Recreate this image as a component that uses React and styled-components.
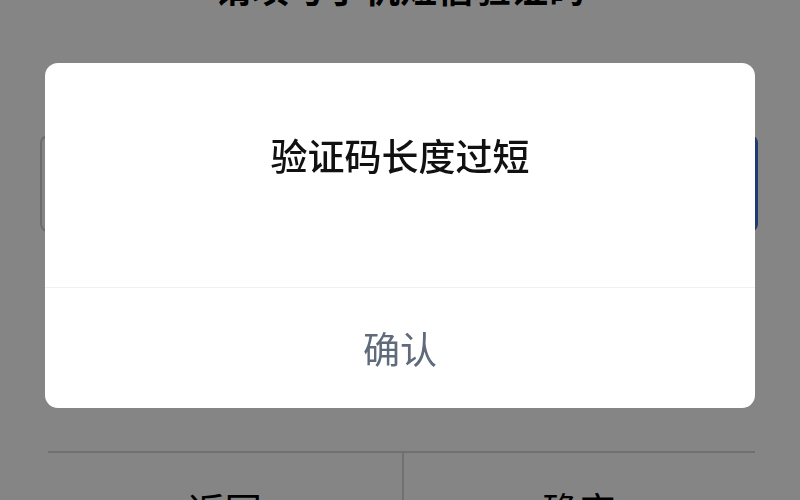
import React from 'react';
import styled, { createGlobalStyle } from 'styled-components';

const GlobalStyle = createGlobalStyle`
  html, body {
    margin: 0;
    padding: 0;
    height: 100%;
    overflow: hidden;
    background: #ffffff;
    font-family: "Noto Sans CJK SC", "Noto Sans", sans-serif;
  }
`

const Page = styled.div`
  display: flex;
  flex-direction: column;
  height: 500px;
  overflow: hidden;

  & > * {
    flex-shrink: 0;
  }
`

const PageTitle = styled.h1`
  margin: -31px 0 0;
  font-size: 37px;
  line-height: 37px;
  font-weight: 700;
  text-align: center;
  color: #000;
`

const CodeInput = styled.div`
  margin: 129px 42px 0 40px;
  height: 93px;
  border: 2px solid #d0d0d0;
  border-right: 3px solid #3d6fd6;
  border-radius: 8px;
  box-shadow: inset -2px 0 0 #c6d6f5;
`

const ButtonRow = styled.div`
  display: grid;
  grid-template-columns: 1fr 1fr;
  margin: 219px 45px 0 48px;
  border-top: 2px solid #d6d6d6;
`

const PageButton = styled.div`
  padding-top: 38px;
  font-size: 37px;
  line-height: 37px;
  text-align: center;
  color: #000;
  border-left: ${p => (p.divided ? '2px solid #d6d6d6' : 'none')};
`

const Overlay = styled.div`
  position: fixed;
  inset: 0;
  background: rgba(0, 0, 0, 0.48);
  display: flex;
  justify-content: center;
  align-items: flex-start;
  padding-top: 63px;
`

const Dialog = styled.div`
  width: 710px;
  height: 345px;
  background: #ffffff;
  border-radius: 13px;
  display: flex;
  flex-direction: column;
  overflow: hidden;
`

const DialogBody = styled.div`
  height: 224px;
  box-sizing: border-box;
  padding-top: 74px;
  text-align: center;
  font-size: 37px;
  line-height: 37px;
  font-weight: 500;
  color: #111;
`

const DialogFooter = styled.button`
  flex: 1;
  border: none;
  border-top: 1px solid #f0f0f0;
  background: transparent;
  font-family: inherit;
  font-size: 37px;
  line-height: 37px;
  color: #5f6b7b;
  display: flex;
  align-items: center;
  justify-content: center;
  padding: 0;
`

const App = () => {
  return (
    <>
      <GlobalStyle />
      <Page>
        <PageTitle>请填写手机短信验证码</PageTitle>
        <CodeInput />
        <ButtonRow>
          <PageButton>返回</PageButton>
          <PageButton divided>确定</PageButton>
        </ButtonRow>
      </Page>
      <Overlay>
        <Dialog>
          <DialogBody>验证码长度过短</DialogBody>
          <DialogFooter>确认</DialogFooter>
        </Dialog>
      </Overlay>
    </>
  )
}

export default App;
